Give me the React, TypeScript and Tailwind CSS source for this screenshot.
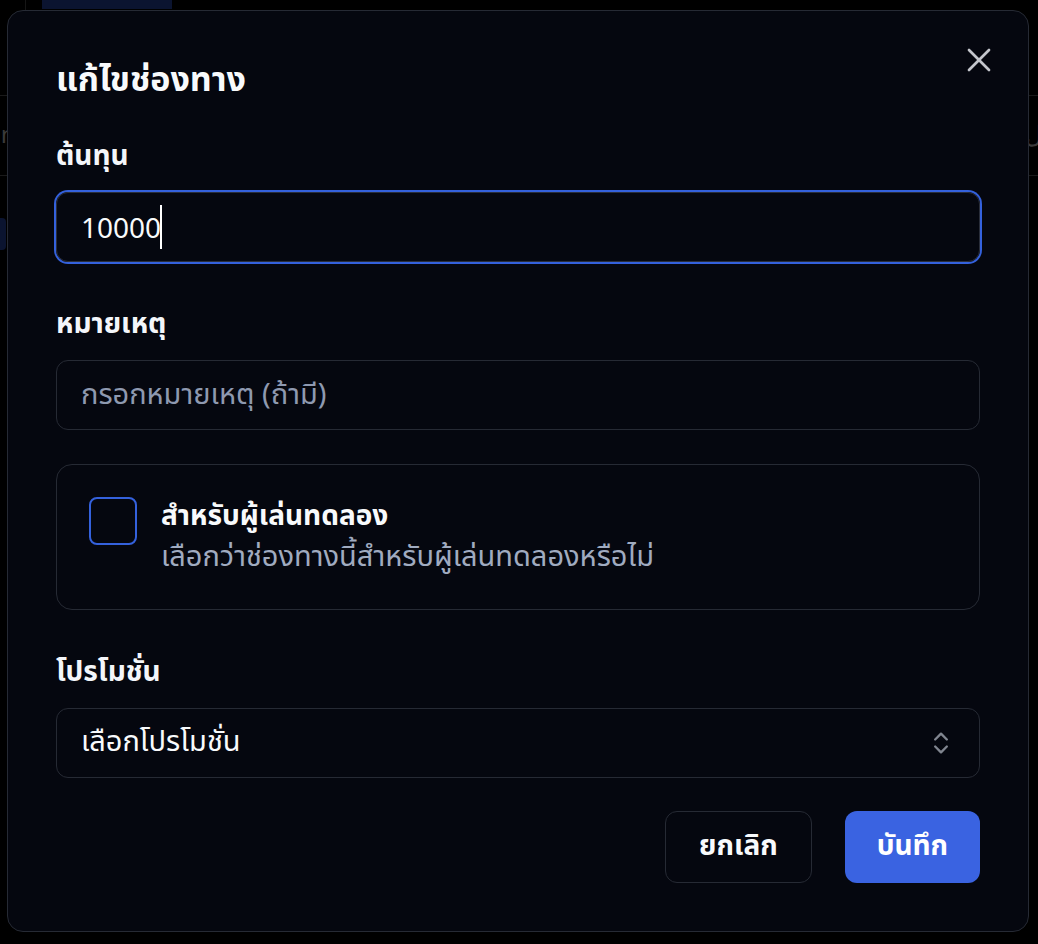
import React, { useState } from 'react';
import { X, ChevronsUpDown } from 'lucide-react';

// faint page content showing behind the modal overlay
function Backdrop() {
  return (
    <div className="flex h-full w-full flex-col">
      <div className="flex h-[10px]">
        <div className="w-[26px] border-r border-[#161616]" />
        <div className="ml-[16px] h-[9px] w-[130px] bg-[#0b1430]" />
      </div>
      <div className="mt-[85px] h-px bg-[#1a1a1a]" />
      <div className="flex h-[79px] items-center justify-between">
        <span className="-ml-[14px] text-[24px] text-[#3a3a3a]">un</span>
        <span className="-mr-[4px] text-[24px] text-[#3a3a3a]">ل</span>
      </div>
      <div className="h-px bg-[#1a1a1a]" />
      <div className="mt-[42px] h-[32px] w-[6px] rounded-r-[4px] bg-[#0b1430]" />
    </div>
  );
}

function Label({ children }: { children: React.ReactNode }) {
  return <label className="mb-[8px] block text-[28px] font-bold leading-[54px] text-[#f4f6fa]">{children}</label>;
}

export default function App() {
  const [capital, setCapital] = useState('10000');
  const [note, setNote] = useState('');
  const [demo, setDemo] = useState(false);

  return (
    <div className="relative h-[944px] w-[1038px] overflow-hidden bg-black font-['Noto_Sans_Thai','Noto_Sans',Inter,sans-serif]">
      <Backdrop />

      <div className="absolute left-[7px] top-[10px] flex w-[1022px] flex-col rounded-[16px] border border-[#262a34] bg-[#05070f] p-[48px]">
        <button className="absolute right-[29px] top-[29px] text-[#c4c6cc]" aria-label="close">
          <X size={40} strokeWidth={1.6} />
        </button>

        <h2 className="text-[34px] font-bold leading-[44px] text-[#f8fafc]">แก้ไขช่องทาง</h2>

        <div className="mt-[27px]">
          <Label>ต้นทุน</Label>
          <div className="relative">
            <input
              value={capital}
              onChange={(e) => setCapital(e.target.value)}
              className="h-[70px] w-full rounded-[12px] border border-[#2a2e3a] bg-transparent px-[24px] pt-[4px] text-[28px] text-[#f8fafc] outline-none ring-2 ring-[#3461dc]"
            />
            {/* text caret */}
            <span className="absolute left-[104px] top-[13px] h-[44px] w-[2px] bg-white" />
          </div>
        </div>

        <div className="mt-[36px]">
          <Label>หมายเหตุ</Label>
          <input
            value={note}
            onChange={(e) => setNote(e.target.value)}
            placeholder="กรอกหมายเหตุ (ถ้ามี)"
            className="h-[70px] w-full rounded-[12px] border border-[#262a34] bg-transparent px-[24px] text-[29px] text-[#f8fafc] outline-none placeholder:text-[#8e99b0]"
          />
        </div>

        <div className="mt-[34px] flex gap-[24px] rounded-[16px] border border-[#262a34] p-[32px]">
          <button
            onClick={() => setDemo(!demo)}
            className="h-[48px] w-[48px] shrink-0 rounded-[8px] border-2 border-[#3461dc]"
          />
          <div className="flex flex-col">
            <span className="text-[28px] font-bold leading-[40px] text-[#f8fafc]">สำหรับผู้เล่นทดลอง</span>
            <span className="text-[29px] leading-[40px] text-[#a0abc0]">เลือกว่าช่องทางนี้สำหรับผู้เล่นทดลองหรือไม่</span>
          </div>
        </div>

        <div className="mt-[36px]">
          <Label>โปรโมชั่น</Label>
          <button className="flex h-[70px] w-full items-center justify-between rounded-[12px] border border-[#262a34] px-[24px] text-[29px] text-[#f8fafc]">
            <span>เลือกโปรโมชั่น</span>
            <ChevronsUpDown size={28} strokeWidth={2} className="text-[#80858f]" />
          </button>
        </div>

        <div className="mt-[33px] flex justify-end gap-[33px]">
          <button className="h-[72px] rounded-[12px] border border-[#262a34] px-[33px] text-[28px] font-bold text-[#f8fafc]">
            ยกเลิก
          </button>
          <button className="h-[72px] rounded-[12px] bg-[#3a63e1] px-[32px] text-[28px] font-bold text-white">
            บันทึก
          </button>
        </div>
      </div>
    </div>
  );
}
